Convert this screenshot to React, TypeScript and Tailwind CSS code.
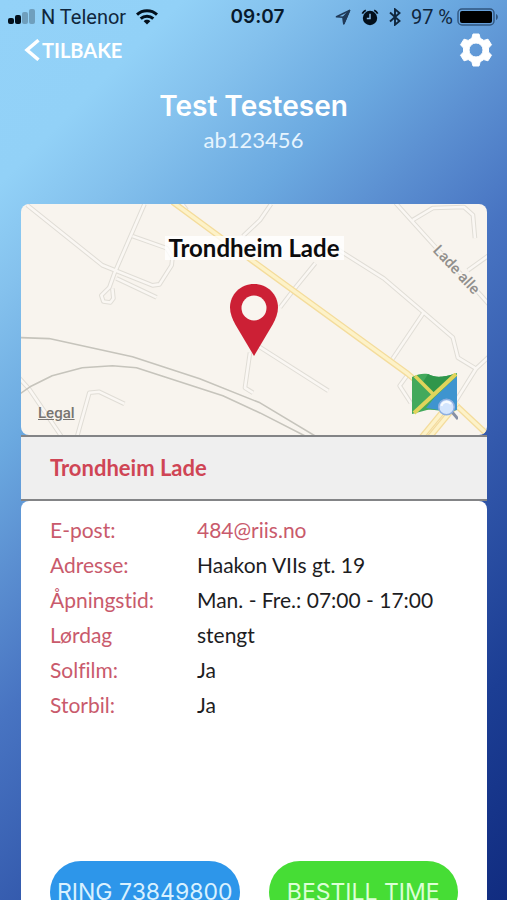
import React from "react";

const details = [
  { label: "E-post:", value: "484@riis.no", href: "mailto:484@riis.no" },
  { label: "Adresse:", value: "Haakon VIIs gt. 19" },
  { label: "Åpningstid:", value: "Man. - Fre.: 07:00 - 17:00" },
  { label: "Lørdag", value: "stengt" },
  { label: "Solfilm:", value: "Ja" },
  { label: "Storbil:", value: "Ja" },
];

const roads = [
  "M7 1 L82 61 L132 81 L139 80 L151 61 L152 52",
  "M124 0 L94 69 L89 83 L81 91 L83 97 L90 98 L93 94 L92 84",
  "M112 32 L146 44 L151 52",
  "M96 74 L136 93",
  "M160 -2 L166 6",
  "M250 0 L239 16 L222 32",
  "M316 45 L362 74 L402 108 L431 133 L436 153 L454 164",
  "M402 108 L371 154",
  "M468 151 L454 164 L434 196",
  "M294 59 L272 86 L259 103",
  "M374 -1 L412 41 L459 91 L467 100",
  "M391 16 L411 4 L442 3 L451 11 L453 34",
  "M467 51 L446 66",
  "M238 142 L307 186",
  "M229 148 L224 183 L232 188",
  "M386 170 L378 181 L389 198",
  "M-1 173 L9 184 L41 231",
  "M57 231 L69 188 L79 187 L104 199",
];

const mainRoads = [
  "M152 -2 L232 57 L386 169 L409 188",
  "M436 202 L468 232",
  "M436 198 L408 232",
  "M428 198 L400 232",
];

const rails = [
  "M0 133 L29 134 L112 152 L179 174 L239 198 L294 231",
  "M0 189 L10 182 L32 171 L62 163 L92 161 L116 163 L202 191 L239 208 L284 231",
];

function StreetMap() {
  return (
    <svg
      viewBox="0 0 466 230"
      preserveAspectRatio="xMidYMid slice"
      className="absolute inset-0 h-full w-full"
      fill="none"
      strokeLinejoin="round"
      aria-hidden="true"
    >
      <rect width="466" height="230" fill="#f8f4ee" />
      <g stroke="#e0ddd6" strokeWidth="4.6">
        {roads.map((d) => <path key={d} d={d} />)}
      </g>
      <g stroke="#faf7f3" strokeWidth="2.6">
        {roads.map((d) => <path key={d} d={d} />)}
      </g>
      <g stroke="#f4dc9c" strokeWidth="6">
        {mainRoads.map((d) => <path key={d} d={d} />)}
      </g>
      <g stroke="#fdf2c8" strokeWidth="3.4">
        {mainRoads.map((d) => <path key={d} d={d} />)}
      </g>
      <g stroke="#c6c4bc" strokeWidth="1.6">
        {rails.map((d) => <path key={d} d={d} />)}
      </g>
      <text
        x="434"
        y="70"
        transform="rotate(47 434 66)"
        textAnchor="middle"
        fill="#918f8c"
        stroke="#f8f4ee"
        strokeWidth="3"
        paintOrder="stroke"
        className="font-[Roboto] text-[15px] font-medium"
      >
        Lade alle
      </text>
    </svg>
  );
}

function SignalIcon() {
  return (
    <svg width="27" height="16" viewBox="0 0 27 16" aria-hidden="true">
      <rect x="0" y="9" width="6" height="6" rx="2" fill="#03101c" />
      <rect x="7" y="6" width="6" height="9" rx="2" fill="#03101c" />
      <rect x="14" y="3" width="6" height="12" rx="2" fill="#6f9fbd" />
      <rect x="21" y="0" width="6" height="15" rx="2" fill="#6f9fbd" />
    </svg>
  );
}

function WifiIcon() {
  return (
    <svg width="22" height="16" viewBox="0 0 22 16" fill="none" stroke="#03101c" strokeWidth="3" aria-hidden="true">
      <path d="M1 5.6 C6.5 .4 15.5 .4 21 5.6" />
      <path d="M4.7 9.7 C8.3 6.3 13.7 6.3 17.3 9.7" />
      <path d="M7.7 12.2 C9.6 10.3 12.4 10.3 14.3 12.2 L11 15.6 Z" fill="#03101c" stroke="none" />
    </svg>
  );
}

function StatusBar() {
  return (
    <div className="grid h-8 grid-cols-[1fr_auto_1fr] items-center px-2 pt-0.5 text-[#10263c]">
      <div className="flex items-center">
        <SignalIcon />
        <span className="ml-1.5 font-[Roboto,sans-serif] text-[20px] leading-6 whitespace-nowrap">N Telenor</span>
        <span className="ml-2.5"><WifiIcon /></span>
      </div>
      <time className="pl-2 font-[Inter,sans-serif] text-[19px] leading-6 font-semibold text-[#071a2c]">09:07</time>
      <div className="flex items-center justify-end">
        <svg width="16" height="16" viewBox="0 0 16 16" fill="none" stroke="#203a58" strokeWidth="1.6" strokeLinejoin="round" aria-hidden="true">
          <path d="M14.5 1.5 L1.5 7.8 L8.2 8.2 L8.8 14.8 Z" />
          <path d="M14.5 1.5 L8.2 8.2 L8.8 14.8 Z" fill="#203a58" />
        </svg>
        <svg width="18" height="17" viewBox="0 0 18 17" className="ml-2.5" aria-hidden="true">
          <circle cx="9" cy="9" r="7.2" fill="#03101c" />
          <path d="M1.3 4.6 A9 9 0 0 1 4.8 1.3 M13.2 1.3 A9 9 0 0 1 16.7 4.6" fill="none" stroke="#03101c" strokeWidth="1.8" />
          <path d="M9 4.8 V9.4 H5.8" fill="none" stroke="#86b9e6" strokeWidth="1.5" />
        </svg>
        <svg width="12" height="18" viewBox="0 0 12 18" className="ml-2.5" fill="none" stroke="#10263c" strokeWidth="1.9" aria-hidden="true">
          <path d="M1 4.5 L10.5 13 L6 16.7 V1.3 L10.5 5 L1 13.5" />
        </svg>
        <span className="ml-2.5 font-[Roboto,sans-serif] text-[20px] leading-6 whitespace-nowrap">97 %</span>
        <svg width="42" height="18" viewBox="0 0 42 18" className="ml-1" aria-hidden="true">
          <rect x="1" y="1" width="36" height="16" rx="4" fill="none" stroke="#31567f" strokeWidth="1.4" />
          <rect x="3" y="3" width="32" height="12" rx="2" fill="#000" />
          <path d="M39 6 C41.5 7 41.5 11 39 12 Z" fill="#31567f" />
        </svg>
      </div>
    </div>
  );
}

function Pin() {
  return (
    <svg width="48" height="72" viewBox="0 0 48 72" role="img" aria-label="Trondheim Lade">
      <path
        d="M24 0 C10.7 0 0 10.4 0 23.5 C0 29.5 2.2 34.5 5.3 40.5 L24 72 L42.7 40.5 C45.8 34.5 48 29.5 48 23.5 C48 10.4 37.3 0 24 0 Z"
        fill="#cc2035"
      />
      <circle cx="24" cy="24" r="12.5" fill="#f9f5ef" />
    </svg>
  );
}

function MapsLogo() {
  return (
    <svg width="47" height="47" viewBox="0 0 47 47" aria-hidden="true">
      <path d="M1 4 C7 1 12 0 17 1 C25 5 30 5 46 0 L46 37 C35 40 25 36 16 37 L1 41 Z" fill="#43a95c" />
      <path d="M17 1 C25 5 32 4 44 1 L22 22 L12 9 Z" fill="#2f964b" />
      <path d="M46 3 V37 C35 40 25 36 15 35 L24 24 Z" fill="#3e94cf" />
      <path d="M4 3 L23 22" stroke="#e0d45b" strokeWidth="3.5" />
      <path d="M3 40 L45 1" stroke="#e0d45b" strokeWidth="4" />
      <path d="M41 39 L47 46" stroke="#8790a5" strokeWidth="3" />
      <circle cx="35.5" cy="34" r="7.8" fill="#d3e5fd" stroke="#8eafe0" strokeWidth="1.6" />
      <path d="M30.5 33 C31.5 28.5 37 27.5 40 31" fill="none" stroke="#f7fbff" strokeWidth="2" />
    </svg>
  );
}

export default function App() {
  return (
    <main className="flex h-screen flex-col overflow-hidden bg-[linear-gradient(135deg,#93d2f8_0%,#92d1f7_13%,#84c1ed_21%,#6ba9e0_32%,#5b8fd1_41%,#4874c2_51%,#345aad_66%,#1c3e94_84%,#112c80_100%)] font-[Lato,sans-serif] [font-variant-ligatures:none]">
      <StatusBar />
      <nav className="flex h-9 items-center justify-between pr-3.5 pl-6 text-white">
        <button type="button" className="flex items-center gap-0.5 text-[20px] leading-6 font-bold">
          <svg width="16" height="22" viewBox="0 0 16 22" fill="none" stroke="currentColor" strokeWidth="3.5" aria-hidden="true">
            <path d="M14.5 1.2 L3 11 L14.5 20.8" />
          </svg>
          TILBAKE
        </button>
        <button type="button" aria-label="Innstillinger">
          <svg width="34" height="34" viewBox="0 0 34 34" fill="currentColor" fillRule="evenodd" aria-hidden="true">
            <path d="M14 1 H20 L21.2 5.3 L24.8 7.4 L29 6.2 L32.5 11.8 L29.5 15 V19 L32.5 22.2 L29 27.8 L24.8 26.6 L21.2 28.7 L20 33 H14 L12.8 28.7 L9.2 26.6 L5 27.8 L1.5 22.2 L4.5 19 V15 L1.5 11.8 L5 6.2 L9.2 7.4 L12.8 5.3 Z M17 10 A7 7 0 1 0 17 24 A7 7 0 1 0 17 10 Z" stroke="currentColor" strokeWidth="1" strokeLinejoin="round" />
          </svg>
        </button>
      </nav>
      <header className="flex flex-col items-center pt-5 pb-12 text-center">
        <h1 className="font-[Inter,sans-serif] text-[28px] leading-9 font-semibold text-white">Test Testesen</h1>
        <p className="text-[22px] leading-8 text-[#e6f4fe]">ab123456</p>
      </header>

      <div className="mr-5 ml-[21px] flex min-h-0 flex-1 flex-col">
        <section className="relative flex h-[231px] shrink-0 flex-col items-center overflow-hidden rounded-lg pt-8">
          <StreetMap />
          <h2 className="relative bg-white/80 px-1 text-[24px] leading-6 font-bold text-[#0c0c0e]">Trondheim Lade</h2>
          <div className="relative mt-6"><Pin /></div>
          <a href="#legal" className="absolute bottom-3 left-[17px] font-[Roboto,sans-serif] text-[15px] leading-5 font-medium text-[#777571] underline">Legal</a>
          <button type="button" aria-label="Åpne i kart" className="absolute right-[29px] bottom-[15px]"><MapsLogo /></button>
        </section>

        <section className="flex h-[66px] shrink-0 items-center border-y-2 border-[#838486] bg-[#efefef] px-[29px]">
          <h2 className="text-[22px] leading-7 font-bold text-[#cf4555]">Trondheim Lade</h2>
        </section>

        <section className="flex min-h-0 flex-1 flex-col rounded-t-lg bg-white px-[29px] pt-[11px]">
          <dl className="grid grid-cols-[147px_1fr] text-[21px] leading-[35px]">
            {details.map(({ label, value, href }) => (
              <React.Fragment key={label}>
                <dt className="text-[#c95a6c]">{label}</dt>
                <dd className="whitespace-nowrap text-[#1d1d1f]">
                  {href ? <a href={href} className="text-[#c95a6c]">{value}</a> : value}
                </dd>
              </React.Fragment>
            ))}
          </dl>
          <div className="mt-[139px] grid shrink-0 grid-cols-2 gap-[29px] font-[Inter,sans-serif] text-[23px] leading-7">
            <button type="button" className="h-[62px] rounded-full bg-[#2d96ea] whitespace-nowrap text-[#d9f1ff]">RING 73849800</button>
            <button type="button" className="h-[62px] rounded-full bg-[#46dd35] whitespace-nowrap text-[#dcffd6]">BESTILL TIME</button>
          </div>
        </section>
      </div>
    </main>
  );
}
